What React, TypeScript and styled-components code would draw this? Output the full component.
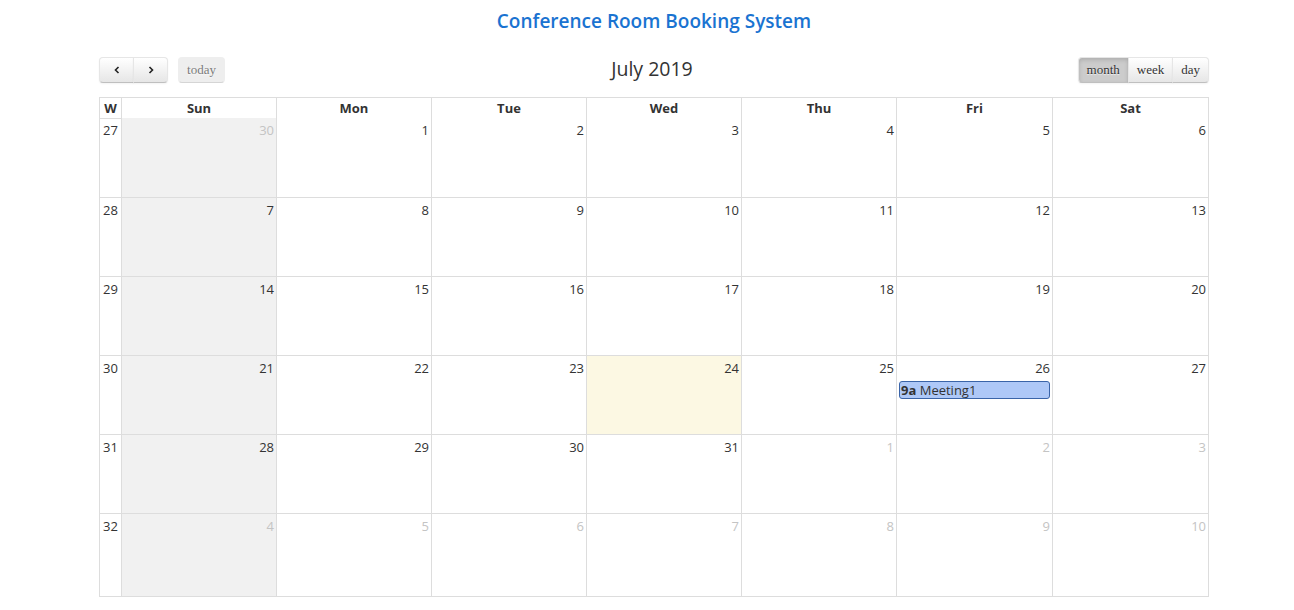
import React from "react";
import styled, { createGlobalStyle, css } from "styled-components";

const GlobalStyle = createGlobalStyle`
  html, body {
    margin: 0;
    padding: 0;
    background: #fff;
  }
  body {
    font-family: "Open Sans", "Noto Sans", "DejaVu Sans", sans-serif;
    color: #333;
  }
`;

type Day = { n: number; other?: boolean; today?: boolean; event?: { time: string; title: string } };
type Week = { wk: number; days: Day[] };

const weeks: Week[] = [
  { wk: 27, days: [{ n: 30, other: true }, { n: 1 }, { n: 2 }, { n: 3 }, { n: 4 }, { n: 5 }, { n: 6 }] },
  { wk: 28, days: [{ n: 7 }, { n: 8 }, { n: 9 }, { n: 10 }, { n: 11 }, { n: 12 }, { n: 13 }] },
  { wk: 29, days: [{ n: 14 }, { n: 15 }, { n: 16 }, { n: 17 }, { n: 18 }, { n: 19 }, { n: 20 }] },
  {
    wk: 30,
    days: [
      { n: 21 },
      { n: 22 },
      { n: 23 },
      { n: 24, today: true },
      { n: 25 },
      { n: 26, event: { time: "9a", title: "Meeting1" } },
      { n: 27 },
    ],
  },
  {
    wk: 31,
    days: [{ n: 28 }, { n: 29 }, { n: 30 }, { n: 31 }, { n: 1, other: true }, { n: 2, other: true }, { n: 3, other: true }],
  },
  {
    wk: 32,
    days: [
      { n: 4, other: true },
      { n: 5, other: true },
      { n: 6, other: true },
      { n: 7, other: true },
      { n: 8, other: true },
      { n: 9, other: true },
      { n: 10, other: true },
    ],
  },
];

const dayNames = ["Sun", "Mon", "Tue", "Wed", "Thu", "Fri", "Sat"];
const rowHeights = [80, 79, 79, 79, 79, 83];

export default function App() {
  return (
    <>
      <GlobalStyle />
      <Page>
        <Heading>Conference Room Booking System</Heading>
        <Toolbar>
          <ToolbarSide>
            <ButtonGroup>
              <ToolButton aria-label="prev">
                <Chevron viewBox="0 0 10 10">
                  <path d="M6.5 2 L3.5 5 L6.5 8" />
                </Chevron>
              </ToolButton>
              <ToolButton aria-label="next">
                <Chevron viewBox="0 0 10 10">
                  <path d="M3.5 2 L6.5 5 L3.5 8" />
                </Chevron>
              </ToolButton>
            </ButtonGroup>
            <ToolButton disabled>today</ToolButton>
          </ToolbarSide>
          <MonthTitle>July 2019</MonthTitle>
          <ToolbarSide $right>
            <ButtonGroup>
              <ToolButton $active>month</ToolButton>
              <ToolButton>week</ToolButton>
              <ToolButton>day</ToolButton>
            </ButtonGroup>
          </ToolbarSide>
        </Toolbar>

        <Calendar>
          <Row $height={20}>
            <HeadCell>W</HeadCell>
            {dayNames.map((d) => (
              <HeadCell key={d}>{d}</HeadCell>
            ))}
          </Row>
          {weeks.map((w, i) => (
            <Row key={w.wk} $height={rowHeights[i]}>
              <WeekCell>{w.wk}</WeekCell>
              {w.days.map((d, j) => (
                <DayCell key={j} $weekend={j === 0} $today={d.today}>
                  <DayNumber $other={d.other}>{d.n}</DayNumber>
                  {d.event && (
                    <EventChip>
                      <b>{d.event.time}</b> {d.event.title}
                    </EventChip>
                  )}
                </DayCell>
              ))}
            </Row>
          ))}
        </Calendar>
      </Page>
    </>
  );
}

const Page = styled.div`
  width: 1110px;
  margin-left: 99px;
  padding-top: 7px;
`;

const Heading = styled.h1`
  margin: 0;
  text-align: center;
  font-size: 19px;
  font-weight: 600;
  line-height: 28px;
  color: #1a73d1;
`;

const Toolbar = styled.div`
  display: flex;
  align-items: center;
  justify-content: space-between;
  margin-top: 22px;
  height: 26px;
  margin-bottom: 14px;
`;

const ToolbarSide = styled.div<{ $right?: boolean }>`
  flex: 1;
  display: flex;
  gap: 10px;
  justify-content: ${(p) => (p.$right ? "flex-end" : "flex-start")};
`;

const MonthTitle = styled.h2`
  margin: 0 4px 4px 0;
  font-size: 19.5px;
  font-weight: 400;
  color: #333;
`;

const ButtonGroup = styled.div`
  display: flex;
  & > button {
    border-radius: 0;
  }
  & > button + button {
    margin-left: -1px;
  }
  & > button:first-child {
    border-radius: 4px 0 0 4px;
  }
  & > button:last-child {
    border-radius: 0 4px 4px 0;
  }
`;

const ToolButton = styled.button<{ $active?: boolean }>`
  height: 26px;
  padding: 0 8px;
  font-family: "Liberation Serif", "Times New Roman", serif;
  font-size: 13px;
  color: #333;
  background-color: #f5f5f5;
  background-image: linear-gradient(to bottom, #fff, #e6e6e6);
  border: 1px solid;
  border-color: #e6e6e6 #e6e6e6 #bfbfbf;
  border-radius: 4px;
  box-shadow: inset 0 1px 0 rgba(255, 255, 255, 0.2), 0 1px 2px rgba(0, 0, 0, 0.05);
  text-shadow: 0 1px 1px rgba(255, 255, 255, 0.75);
  display: flex;
  align-items: center;
  justify-content: center;
  cursor: pointer;

  &[aria-label] {
    width: 35px;
    padding: 0;
  }

  &:disabled {
    opacity: 0.65;
    background-image: none;
    background-color: #e6e6e6;
    box-shadow: none;
    cursor: default;
    width: 47px;
  }

  ${(p) =>
    p.$active &&
    css`
      background-color: #ccc;
      background-image: none;
      box-shadow: inset 0 2px 4px rgba(0, 0, 0, 0.15), 0 1px 2px rgba(0, 0, 0, 0.05);
    `}
`;

const Chevron = styled.svg`
  width: 10px;
  height: 10px;
  fill: none;
  stroke: #222;
  stroke-width: 1.6;
`;

const Calendar = styled.div`
  border-top: 1px solid #ddd;
  border-left: 1px solid #ddd;
  font-size: 13px;
`;

const Row = styled.div<{ $height: number }>`
  display: grid;
  grid-template-columns: 22px repeat(5, 155px) 156px 156px;
  height: ${(p) => p.$height}px;
`;

const cellBorder = css`
  border-right: 1px solid #ddd;
  border-bottom: 1px solid #ddd;
  box-sizing: border-box;
`;

const HeadCell = styled.div`
  ${cellBorder};
  font-weight: 700;
  font-size: 13px;
  text-align: center;
  line-height: 20px;
  color: #333;
`;

const WeekCell = styled.div`
  ${cellBorder};
  padding: 2px 0 0 3px;
  line-height: 20px;
  color: #333;
`;

const DayCell = styled.div<{ $weekend?: boolean; $today?: boolean }>`
  ${cellBorder};
  display: flex;
  flex-direction: column;
  padding: 2px 2px 0;
  background: ${(p) => (p.$today ? "#fcf8e3" : p.$weekend ? "#f1f1f1" : "#fff")};
`;

const DayNumber = styled.div<{ $other?: boolean }>`
  text-align: right;
  line-height: 20px;
  color: ${(p) => (p.$other ? "#c4c4c4" : "#333")};
`;

const EventChip = styled.div`
  margin-top: 3px;
  padding: 0 1px;
  height: 18px;
  line-height: 16px;
  box-sizing: border-box;
  background: #aec8f7;
  border: 1px solid #3a64a8;
  border-radius: 3px;
  color: #333;
  font-size: 13px;
  white-space: nowrap;
  overflow: hidden;
`;
